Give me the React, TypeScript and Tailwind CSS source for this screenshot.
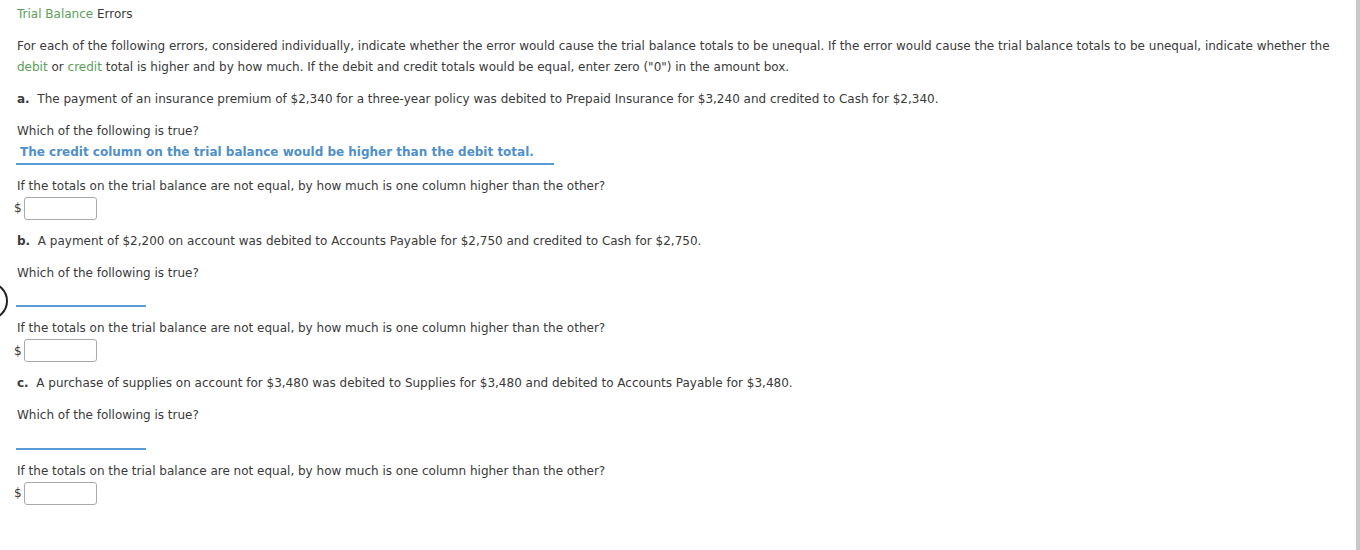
import React from "react";

const Input = () => (
  <div className="flex items-center h-[23px]">
    <span className="w-[7px] ml-[-3px] mr-[3px] text-[12px] leading-none">$</span>
    <input
      type="text"
      className="w-[73px] h-[23px] border border-[#a9a9a9] rounded-[3px] bg-white outline-none"
    />
  </div>
);

const Section = ({
  letter,
  text,
  answer,
}: {
  letter: string;
  text: string;
  answer?: string;
}) => (
  <>
    <p className="mt-[11px]">
      <b>{letter}</b>&nbsp; {text}
    </p>
    <p className="mt-[11px]">Which of the following is true?</p>
    {answer ? (
      <div className="ml-[-1px] w-[538px] h-[22.5px] border-b-2 border-[#5b9bd5] pl-[4px] font-bold text-[#4f8fca]">
        {answer}
      </div>
    ) : (
      <div className="ml-[-1px] w-[130px] h-[23.5px] border-b-2 border-[#5b9bd5]" />
    )}
    <p className="mt-[11px]">
      If the totals on the trial balance are not equal, by how much is one column higher than the other?
    </p>
    <Input />
  </>
);

export default function App() {
  return (
    <div className="relative flex h-[550px] w-[1360px] overflow-hidden bg-white text-[#3a3a3a] font-['DejaVu_Sans',Verdana,sans-serif] text-[12px] leading-[21px]">
      <div className="flex-1 pl-[17px] pt-[4px]">
        <p>
          <span className="text-[#5aa05a]">Trial Balance</span> Errors
        </p>
        <p className="mt-[11px] pr-[15px]">
          For each of the following errors, considered individually, indicate whether the error would cause the trial balance totals to be unequal. If the error would cause the trial balance totals to be unequal, indicate whether the{" "}
          <span className="text-[#5aa05a]">debit</span> or <span className="text-[#5aa05a]">credit</span> total is higher and by how much. If the debit and credit totals would be equal, enter zero ("0") in the amount box.
        </p>
        <Section
          letter="a."
          text="The payment of an insurance premium of $2,340 for a three-year policy was debited to Prepaid Insurance for $3,240 and credited to Cash for $2,340."
          answer="The credit column on the trial balance would be higher than the debit total."
        />
        <Section
          letter="b."
          text="A payment of $2,200 on account was debited to Accounts Payable for $2,750 and credited to Cash for $2,750."
        />
        <Section
          letter="c."
          text="A purchase of supplies on account for $3,480 was debited to Supplies for $3,480 and debited to Accounts Payable for $3,480."
        />
      </div>
      <div className="w-[4px] bg-[#c9c9c9]" />
      <div className="absolute left-[-30px] top-[282px] h-[38px] w-[38px] rounded-full border-[2.5px] border-[#222]" />
    </div>
  );
}
